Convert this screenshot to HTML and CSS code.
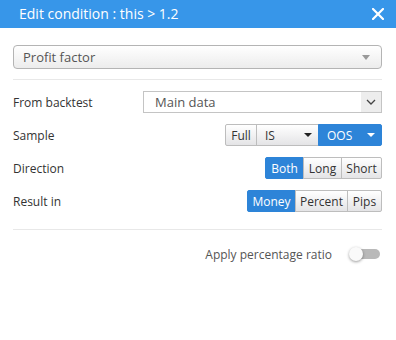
FILE: index.html
```html
<!DOCTYPE html>
<html>
<head>
<meta charset="utf-8">
<link rel="stylesheet" href="styles.css">
</head>
<body>
<div class="dialog">
  <div class="header">
    <span class="title">Edit condition : this &gt; 1.2</span>
    <svg class="close" width="12" height="12" viewBox="0 0 12 12"><path d="M1 1 L11 11 M11 1 L1 11" stroke="#fff" stroke-width="2.2" stroke-linecap="square"/></svg>
  </div>
  <div class="body">
    <div class="metric">
      <span>Profit factor</span>
      <svg width="8" height="5" viewBox="0 0 8 5"><path d="M0 0 H8 L4 5 Z" fill="#999"/></svg>
    </div>
    <div class="divider first"></div>
    <div class="rows">
      <div class="row">
        <span class="label">From backtest</span>
        <div class="select">
          <span class="sel-text">Main data</span>
          <span class="sel-btn"><svg width="10" height="6" viewBox="0 0 10 6"><path d="M1 1 L5 5 L9 1" fill="none" stroke="#444" stroke-width="1.3"/></svg></span>
        </div>
      </div>
      <div class="row">
        <span class="label">Sample</span>
        <div class="group">
          <span class="btn full">Full</span>
          <span class="btn drop is">IS<svg width="8" height="4" viewBox="0 0 8 4"><path d="M0 0 H8 L4 4 Z" fill="#222"/></svg></span>
          <span class="btn drop oos active">OOS<svg width="8" height="4" viewBox="0 0 8 4"><path d="M0 0 H8 L4 4 Z" fill="#fff"/></svg></span>
        </div>
      </div>
      <div class="row">
        <span class="label">Direction</span>
        <div class="group">
          <span class="btn active w38">Both</span>
          <span class="btn w38">Long</span>
          <span class="btn w40">Short</span>
        </div>
      </div>
      <div class="row">
        <span class="label">Result in</span>
        <div class="group">
          <span class="btn active w48">Money</span>
          <span class="btn w52">Percent</span>
          <span class="btn w34">Pips</span>
        </div>
      </div>
    </div>
    <div class="divider second"></div>
    <div class="apply">
      <span class="apply-text">Apply percentage ratio</span>
      <span class="toggle"><span class="knob"></span></span>
    </div>
  </div>
</div>
</body>
</html>
```
FILE: styles.css
```css
html, body {
  margin: 0;
  padding: 0;
  background: #fff;
  font-family: "Open Sans", "DejaVu Sans", sans-serif;
  color: #333;
}
.dialog {
  width: 396px;
  height: 340px;
  background: #fff;
}
.header {
  height: 28px;
  background: #3796e9;
  display: flex;
  align-items: center;
  justify-content: space-between;
  padding: 0 12px 0 19px;
  box-sizing: border-box;
}
.title {
  color: #fff;
  font-size: 14px;
  line-height: 28px;
  margin-top: -1px;
}
.close {
  display: block;
}
.body {
  padding: 17px 14px 0 13px;
}
.metric {
  height: 24px;
  box-sizing: border-box;
  border: 1px solid #b4b4b4;
  border-radius: 4px;
  background: linear-gradient(#ffffff, #ececec);
  display: flex;
  align-items: center;
  justify-content: space-between;
  padding: 0 11px 0 9px;
  font-size: 13px;
  color: #555;
}
.divider {
  height: 1px;
  background: #e8e8e8;
}
.divider.first {
  margin-top: 10px;
}
.rows {
  display: flex;
  flex-direction: column;
  gap: 11px;
  margin-top: 11px;
}
.row {
  display: flex;
  align-items: center;
  justify-content: space-between;
  height: 22px;
}
.label {
  font-size: 12px;
  color: #333;
}
.select {
  width: 239px;
  height: 22px;
  box-sizing: border-box;
  border: 1px solid #c4c4c4;
  display: flex;
  align-items: stretch;
}
.sel-text {
  flex: 1;
  font-size: 13px;
  color: #555;
  padding-left: 11px;
  line-height: 20px;
}
.sel-btn {
  width: 20px;
  background: #ededed;
  display: flex;
  align-items: center;
  justify-content: center;
}
.group {
  display: flex;
  height: 22px;
}
.btn {
  box-sizing: border-box;
  height: 22px;
  border: 1px solid #bdbdbd;
  margin-left: -1px;
  background: linear-gradient(#ffffff, #e4e4e6);
  font-size: 12px;
  color: #333;
  display: flex;
  align-items: center;
  justify-content: center;
}
.btn:first-child {
  margin-left: 0;
  border-radius: 2px 0 0 2px;
}
.btn:last-child {
  border-radius: 0 2px 2px 0;
}
.btn.active {
  background: #2d84d8;
  border-color: #2d84d8;
  color: #fff;
}
.btn.full { width: 32px; }
.btn.drop {
  justify-content: space-between;
  padding: 0 6px 0 8px;
}
.btn.is { width: 63px; }
.btn.oos { width: 64px; }
.w38 { width: 39px; }
.w40 { width: 41px; }
.w48 { width: 49px; }
.w52 { width: 53px; }
.w34 { width: 35px; }
.divider.second {
  margin-top: 17px;
}
.apply {
  display: flex;
  justify-content: flex-end;
  align-items: center;
  margin-top: 16px;
  padding-right: 2px;
  height: 16px;
}
.apply-text {
  font-size: 12px;
  color: #555;
  margin-right: 18px;
}
.toggle {
  position: relative;
  width: 30px;
  height: 10px;
  border-radius: 5px;
  background: #b9b9b9;
}
.knob {
  position: absolute;
  left: -1px;
  top: -2px;
  width: 14px;
  height: 14px;
  border-radius: 50%;
  background: #fafafa;
  box-shadow: 0 1px 3px rgba(0,0,0,0.4);
}
```
